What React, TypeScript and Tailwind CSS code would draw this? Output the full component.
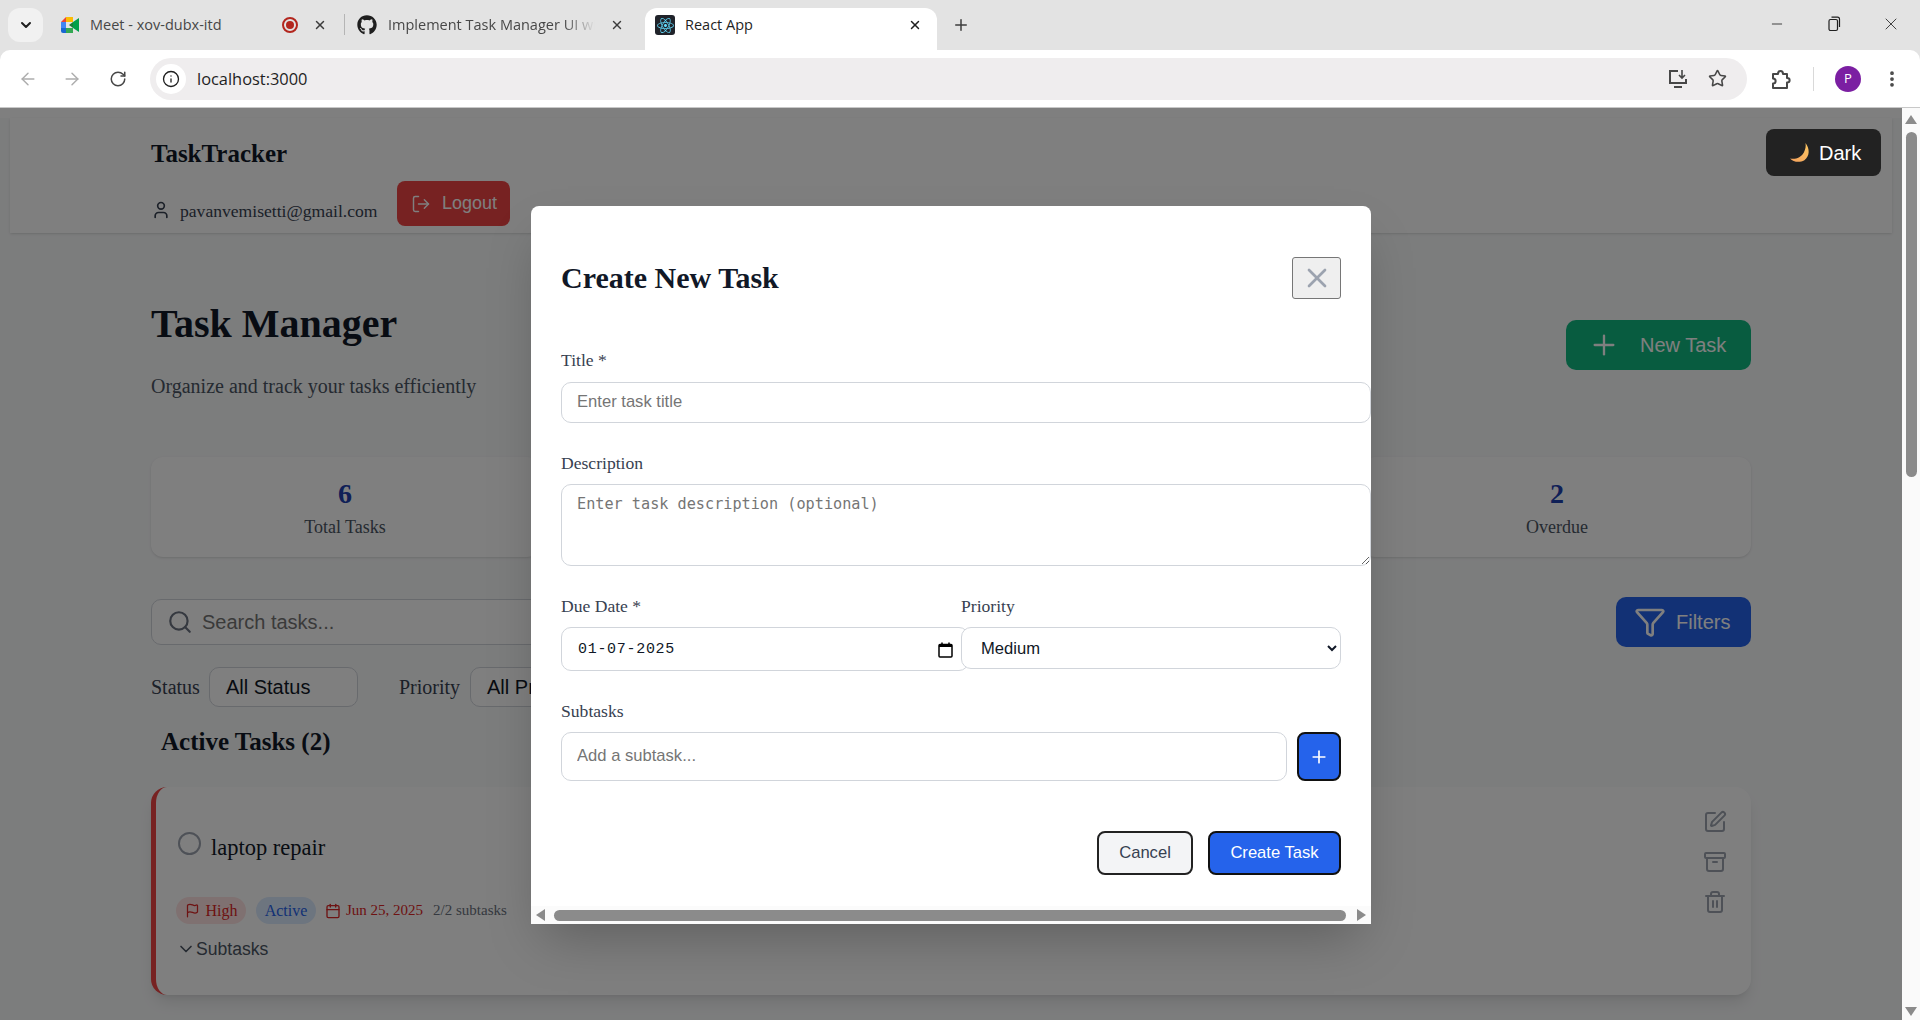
import { Archive, ArrowLeft, ArrowRight, Calendar, ChevronDown, EllipsisVertical, Flag, Funnel, Info, LogOut, Minus, Plus, RotateCw, Search, SquarePen, Star, Trash2, User, X } from 'lucide-react';
import { FaGithub, FaReact } from 'react-icons/fa';

function MeetIcon() {
  return (
    <svg width="18" height="16" viewBox="0 0 18 16">
      <path d="M0 5 L5 0 V5 Z" fill="#ea4335" />
      <path d="M5 0 H12 V5 H5 Z" fill="#fbbc04" />
      <path d="M0 5 H5 V11 H0 Z" fill="#4285f4" />
      <path d="M0 11 H5 V16 H2 Q0 16 0 14 Z" fill="#1967d2" />
      <path d="M5 11 H12 V16 H5 Z" fill="#34a853" />
      <path d="M12 0 V5 L18 1 V15 L12 11 V16 Z" fill="#00a04a" />
      <path d="M12 5 V11 L8 8 Z" fill="#188038" />
    </svg>
  );
}

function TabStrip() {
  return (
    <div className="h-[50px] bg-[#e3e3e3] flex items-end font-['Open_Sans'] text-[14.5px] relative">
      <div className="absolute left-[8px] top-[8px] w-[35px] h-[34px] rounded-[12px] bg-[#f1f1f1] flex items-center justify-center">
        <ChevronDown size={16} strokeWidth={3} className="text-[#1f1f1f]" />
      </div>
      <div className="ml-[61px] w-[283px] h-[42px] pb-[8px] flex items-center text-[#474747]">
        <MeetIcon />
        <span className="ml-[11px] w-[192px]">Meet - xov-dubx-itd</span>
        <span className="w-[16px] h-[16px] rounded-full border-2 border-[#b3261e] flex items-center justify-center">
          <span className="w-[8px] h-[8px] rounded-full bg-[#b3261e]" />
        </span>
        <X size={14} strokeWidth={2.5} className="ml-[15px] text-[#3c3c3c]" />
      </div>
      <div className="w-px h-[21px] bg-[#b5b5b5] mb-[15px]" />
      <div className="ml-[12px] w-[288px] h-[42px] pb-[8px] flex items-center text-[#474747]">
        <FaGithub size={20} className="text-[#1f1f1f] shrink-0" />
        <span className="ml-[11px] w-[207px] overflow-hidden whitespace-nowrap [mask-image:linear-gradient(to_right,black_85%,transparent)]">Implement Task Manager UI with</span>
        <X size={14} strokeWidth={2.5} className="ml-[15px] text-[#3c3c3c]" />
      </div>
      <div className="w-[292px] h-[42px] pb-[8px] bg-white rounded-t-[12px] flex items-center pl-[10px] text-[#1f1f1f]">
        <span className="w-[20px] h-[20px] rounded-[3px] bg-[#20232a] flex items-center justify-center">
          <FaReact size={17} className="text-[#61dafb]" />
        </span>
        <span className="ml-[10px] w-[223px]">React App</span>
        <X size={14} strokeWidth={2.5} className="text-[#1f1f1f]" />
      </div>
      <Plus size={18} strokeWidth={2} className="ml-[15px] mb-[16px] text-[#3c3c3c]" />
      <div className="ml-auto h-full pb-[2px] flex items-center text-[#1f1f1f]">
        <Minus size={16} strokeWidth={1.25} />
        <svg className="ml-[42px]" width="14" height="16" viewBox="0 0 14 16" fill="none" stroke="currentColor" strokeWidth="1.2">
          <rect x="2" y="3.5" width="8.5" height="11" rx="1.5" />
          <path d="M4.5 1.2 H10.5 Q12.5 1.2 12.5 3.2 V11" />
        </svg>
        <X size={20} strokeWidth={1} className="ml-[40px] mr-[19px]" />
      </div>
    </div>
  );
}

function Toolbar() {
  return (
    <div className="h-[58px] bg-[#e3e3e3] border-b border-[#c8c8c8]">
      <div className="h-[57px] bg-white rounded-t-[10px] flex items-center font-['Open_Sans']">
        <ArrowLeft size={20} strokeWidth={1.75} className="ml-[18px] text-[#adadad]" />
        <ArrowRight size={20} strokeWidth={1.75} className="ml-[24px] text-[#adadad]" />
        <RotateCw size={18} strokeWidth={2} className="ml-[27px] text-[#474747]" />
        <div className="ml-[23px] w-[1597px] h-[42px] rounded-full bg-[#efedee] flex items-center pl-[6px] pr-[20px]">
          <span className="w-[30px] h-[30px] rounded-full bg-white flex items-center justify-center">
            <Info size={18} strokeWidth={1.75} className="text-[#1f1f1f]" />
          </span>
          <span className="ml-[11px] mt-[2px] text-[16.4px] text-[#1f1f1f]">localhost:3000</span>
          <svg className="ml-auto" width="22" height="22" viewBox="0 0 22 22" fill="none" stroke="#474747" strokeWidth="2">
            <path d="M11 3 H3 V15 H19 V11" />
            <path d="M7 19 H15" />
            <path d="M15 2 V10 M12 7 L15 10 L18 7" strokeWidth="1.6" />
          </svg>
          <Star size={19} strokeWidth={2} className="ml-[19px] text-[#474747]" />
        </div>
        <svg className="ml-[23px]" width="22" height="22" viewBox="0 0 22 22" fill="none" stroke="#474747" strokeWidth="2" strokeLinejoin="round">
          <path d="M3 6 H8 C8 2 13 2 13 6 H17 V10 C20.5 10 20.5 14.5 17 14.5 V20 H3 V15.5 C6.5 15.5 6.5 10.5 3 10.5 Z" />
        </svg>
        <div className="ml-[21px] w-px h-[24px] bg-[#d9d9d9]" />
        <span className="ml-[21px] w-[26px] h-[26px] rounded-full bg-[#7b1fa2] text-white text-[13px] flex items-center justify-center">P</span>
        <EllipsisVertical size={20} strokeWidth={2.5} className="ml-[21px] text-[#474747]" />
      </div>
    </div>
  );
}

function PageScrollbar() {
  return (
    <div className="w-[18px] bg-[#fafafa] flex flex-col items-center">
      <div className="mt-[7px] w-0 h-0 border-x-[6px] border-x-transparent border-b-[9px] border-b-[#8b8b8b]" />
      <div className="mt-[8px] w-[11px] h-[345px] rounded-full bg-[#8b8b8b]" />
      <div className="mt-auto mb-[4px] w-0 h-0 border-x-[6px] border-x-transparent border-t-[9px] border-t-[#8b8b8b]" />
    </div>
  );
}

function StatCard({ value, label }: { value: string; label: string }) {
  return (
    <div className="h-[100px] bg-white rounded-[12px] shadow-sm flex flex-col items-center pt-[20px]">
      <span className="text-[28px] leading-[34px] font-bold text-[#1e40af]">{value}</span>
      <span className="mt-[4px] text-[18px] leading-[24px] text-[#4b5563]">{label}</span>
    </div>
  );
}

function PageBehind() {
  return (
    <div className="h-full bg-[#f9fafb] font-['Liberation_Serif',serif]">
      {/* Header */}
      <div className="mx-[10px] mt-[10px] h-[115px] bg-white shadow-sm pl-[141px] pt-[18px]">
        <div className="text-[25px] leading-[36px] font-bold text-[#111827]">TaskTracker</div>
        <div className="mt-[9px] flex items-end">
          <User size={20} strokeWidth={2} className="mb-[6px] text-[#374151]" />
          <span className="ml-[9px] mb-[3px] text-[17.6px] leading-[24px] text-[#374151]">pavanvemisetti@gmail.com</span>
          <button className="ml-[20px] h-[45px] w-[113px] rounded-[8px] bg-[#ef4444] text-white flex items-center justify-center gap-[11px] font-['Liberation_Sans'] text-[18px]">
            <LogOut size={20} strokeWidth={1.75} />
            Logout
          </button>
        </div>
      </div>

      <div className="ml-[151px] w-[1600px]">
        {/* Title */}
        <div className="flex items-start justify-between">
          <div>
            <h1 className="mt-[67px] text-[40px] leading-[48px] font-bold text-[#111827]">Task Manager</h1>
            <p className="mt-[24px] text-[20px] leading-[28px] text-[#4b5563]">Organize and track your tasks efficiently</p>
          </div>
          <button className="mt-[87px] w-[185px] h-[50px] rounded-[10px] bg-[#10b981] text-white flex items-center pl-[22px] font-['Liberation_Sans'] text-[20px]">
            <Plus size={32} strokeWidth={1.75} />
            <span className="ml-[20px]">New Task</span>
          </button>
        </div>

        {/* Stats */}
        <div className="mt-[57px] grid grid-cols-4 gap-4">
          <StatCard value="6" label="Total Tasks" />
          <StatCard value="2" label="Active" />
          <StatCard value="4" label="Completed" />
          <StatCard value="2" label="Overdue" />
        </div>

        {/* Search */}
        <div className="mt-[40px] h-[50px] flex items-center justify-between font-['Liberation_Sans']">
          <div className="w-[1000px] h-[46px] rounded-[10px] border border-[#d1d5db] bg-white flex items-center pl-[15px]">
            <Search size={26} strokeWidth={2} className="text-[#6b7280]" />
            <span className="ml-[9px] text-[20px] text-[#757575]">Search tasks...</span>
          </div>
          <button className="w-[135px] h-[50px] rounded-[10px] bg-[#2563eb] text-white flex items-center pl-[18px] text-[20px]">
            <Funnel size={32} strokeWidth={2} />
            <span className="ml-[10px]">Filters</span>
          </button>
        </div>

        {/* Filter row */}
        <div className="mt-[20px] flex items-center text-[20px] text-[#374151]">
          <span>Status</span>
          <div className="ml-[9px] w-[149px] h-[40px] rounded-[10px] border border-[#d1d5db] bg-white pl-[16px] flex items-center font-['Liberation_Sans'] text-[20px] text-[#111827]">All Status</div>
          <span className="ml-[41px]">Priority</span>
          <div className="ml-[10px] w-[149px] h-[40px] rounded-[10px] border border-[#d1d5db] bg-white pl-[16px] flex items-center font-['Liberation_Sans'] text-[20px] text-[#111827]">All Priority</div>
        </div>

        <h2 className="mt-[19px] ml-[10px] text-[25px] leading-[32px] font-bold text-[#111827]">Active Tasks (2)</h2>

        {/* Task card */}
        <div className="mt-[29px] h-[208px] bg-white rounded-[16px] border-l-[5px] border-[#ef4444] shadow-lg flex justify-between">
          <div className="pl-[22px] pt-[45px]">
            <div className="flex items-start gap-[10px]">
              <span className="w-[23px] h-[23px] rounded-full border-2 border-[#9ca3af]" />
              <span className="text-[22.5px] leading-[32px] text-[#111827]">laptop repair</span>
            </div>
            <div className="mt-[33px] ml-[-2px] flex items-center text-[#dc2626]">
              <span className="h-[27px] w-[70px] rounded-full bg-[#fee2e2] flex items-center justify-center gap-[6px] text-[16px]">
                <Flag size={15} strokeWidth={2} />
                High
              </span>
              <span className="ml-[10px] h-[27px] w-[60px] rounded-full bg-[#dbeafe] text-[#2563eb] flex items-center justify-center text-[16px]">Active</span>
              <Calendar size={16} strokeWidth={2} className="ml-[9px]" />
              <span className="ml-[5px] text-[15px]">Jun 25, 2025</span>
              <span className="ml-[10px] text-[15px] text-[#6b7280]">2/2 subtasks</span>
            </div>
            <div className="mt-[13px] ml-[-2px] flex items-center font-['Liberation_Sans'] text-[17.6px] leading-[24px] text-[#4b5563]">
              <ChevronDown size={20} strokeWidth={2} />
              <span>Subtasks</span>
            </div>
          </div>
          <div className="pr-[24px] pt-[23px] flex flex-col gap-[16px] text-[#9ca3af]">
            <SquarePen size={24} strokeWidth={2} />
            <Archive size={24} strokeWidth={2} />
            <Trash2 size={24} strokeWidth={2} />
          </div>
        </div>
      </div>
    </div>
  );
}

function CreateTaskModal() {
  const label = "text-[17.6px] leading-[24px] text-[#374151]";
  const field = "rounded-[10px] border border-[#d1d5db] bg-white outline-none font-['Liberation_Sans'] text-[16.6px] placeholder:text-[#757575]";
  return (
    <div className="w-[840px] h-[718px] mt-[2px] bg-white rounded-t-[8px] shadow-2xl overflow-hidden flex flex-col font-['Liberation_Serif',serif]">
      <div className="flex-1 min-h-0 pt-[51px] pl-[30px] pr-[30px]">
        <div className="h-[42px] flex items-center justify-between">
          <h2 className="text-[30px] leading-[36px] font-bold text-[#111827]">Create New Task</h2>
          <button className="w-[49px] h-[42px] rounded-[3px] border border-[#767676] bg-[#efefef] flex items-center justify-center text-[#9ca3af]">
            <X size={32} strokeWidth={2} />
          </button>
        </div>

        <div className={`mt-[49px] ${label}`}>Title *</div>
        <input placeholder="Enter task title" className={`mt-[10px] block w-[810px] h-[41px] pl-[15px] pb-[1px] ${field}`} />

        <div className={`mt-[28px] ${label}`}>Description</div>
        <textarea placeholder="Enter task description (optional)" className="mt-[9px] block w-[810px] h-[82px] pl-[15px] pt-[8px] rounded-[10px] border border-[#d1d5db] bg-white outline-none font-['DejaVu_Sans_Mono'] text-[15.2px] placeholder:text-[#757575]" />

        <div className="mt-[28px] grid grid-cols-[400px_380px] h-[77px]">
          <div>
            <div className={label}>Due Date *</div>
            <div className="mt-[9px] w-[408px] h-[44px] rounded-[10px] border border-[#d1d5db] bg-white flex items-center justify-between pl-[16px] pr-[15px] pt-[2px] font-['Liberation_Mono'] text-[15px] tracking-[0.7px] text-[#111827]">
              <span>01-07-2025</span>
              <svg width="15" height="16" viewBox="0 0 15 16" fill="none" stroke="black">
                <rect x="1" y="2.5" width="13" height="12.5" rx="1" strokeWidth="1.5" />
                <rect x="1" y="2" width="13" height="3" fill="black" strokeWidth="0" />
                <path d="M4 0.5 V3 M11 0.5 V3" strokeWidth="1.5" />
              </svg>
            </div>
          </div>
          <div className="relative z-10">
            <div className={label}>Priority</div>
            <select defaultValue="medium" className={`mt-[9px] w-[380px] h-[42px] pl-[15px] pr-[4px] pt-[1px] text-[#111827] ${field}`}>
              <option value="medium">Medium</option>
            </select>
          </div>
        </div>

        <div className={`mt-[28px] ${label}`}>Subtasks</div>
        <div className="mt-[9px] flex gap-[10px] w-[780px]">
          <input placeholder="Add a subtask..." className={`w-[726px] h-[49px] pl-[15px] pb-[2px] ${field}`} />
          <button className="w-[44px] h-[49px] rounded-[8px] border-2 border-[#111] bg-[#2563eb] text-white flex items-center justify-center">
            <Plus size={20} strokeWidth={2} />
          </button>
        </div>

        <div className="mt-[50px] w-[780px] flex justify-end gap-[15px] font-['Liberation_Sans'] text-[16.6px]">
          <button className="w-[96px] h-[44px] rounded-[8px] border-2 border-[#222] bg-[#f3f4f6] text-[#374151]">Cancel</button>
          <button className="w-[133px] h-[44px] rounded-[8px] border-2 border-[#111] bg-[#2563eb] text-white">Create Task</button>
        </div>
      </div>

      {/* horizontal scrollbar */}
      <div className="h-[18px] bg-[#fbfbfb] flex items-center pl-[5px] pr-[5px]">
        <div className="w-0 h-0 border-y-[6px] border-y-transparent border-r-[9px] border-r-[#8b8b8b]" />
        <div className="ml-[9px] flex-1 h-[11px] rounded-full bg-[#8b8b8b]" />
        <div className="ml-[11px] w-0 h-0 border-y-[6px] border-y-transparent border-l-[9px] border-l-[#8b8b8b]" />
      </div>
    </div>
  );
}

export default function App() {
  return (
    <div className="h-[1020px] w-[1920px] overflow-hidden flex flex-col bg-white">
      <TabStrip />
      <Toolbar />
      <div className="flex-1 min-h-0 flex">
        <div className="relative flex-1 min-w-0 overflow-hidden">
          <PageBehind />
          <div className="absolute inset-0 bg-black/50 flex items-center justify-center">
            <CreateTaskModal />
          </div>
          <button className="absolute right-[21px] top-[21px] w-[115px] h-[47px] rounded-[8px] bg-[#222222] text-white flex items-center pl-[23px] font-['Liberation_Sans'] text-[20px]">
            <svg width="22" height="22" viewBox="0 0 20 20">
              <defs>
                <linearGradient id="moon" x1="0" y1="1" x2="1" y2="0">
                  <stop offset="0" stopColor="#f4a15d" />
                  <stop offset="1" stopColor="#fbc661" />
                </linearGradient>
              </defs>
              <path d="M15 1 C19 6 19 13 14 16.5 C10 19 4 18.5 1 15 C6 16 11 14 13.5 9.5 C15 6.5 15.5 4 15 1 Z" fill="url(#moon)" />
            </svg>
            <span className="ml-[8px]">Dark</span>
          </button>
        </div>
        <PageScrollbar />
      </div>
    </div>
  );
}
